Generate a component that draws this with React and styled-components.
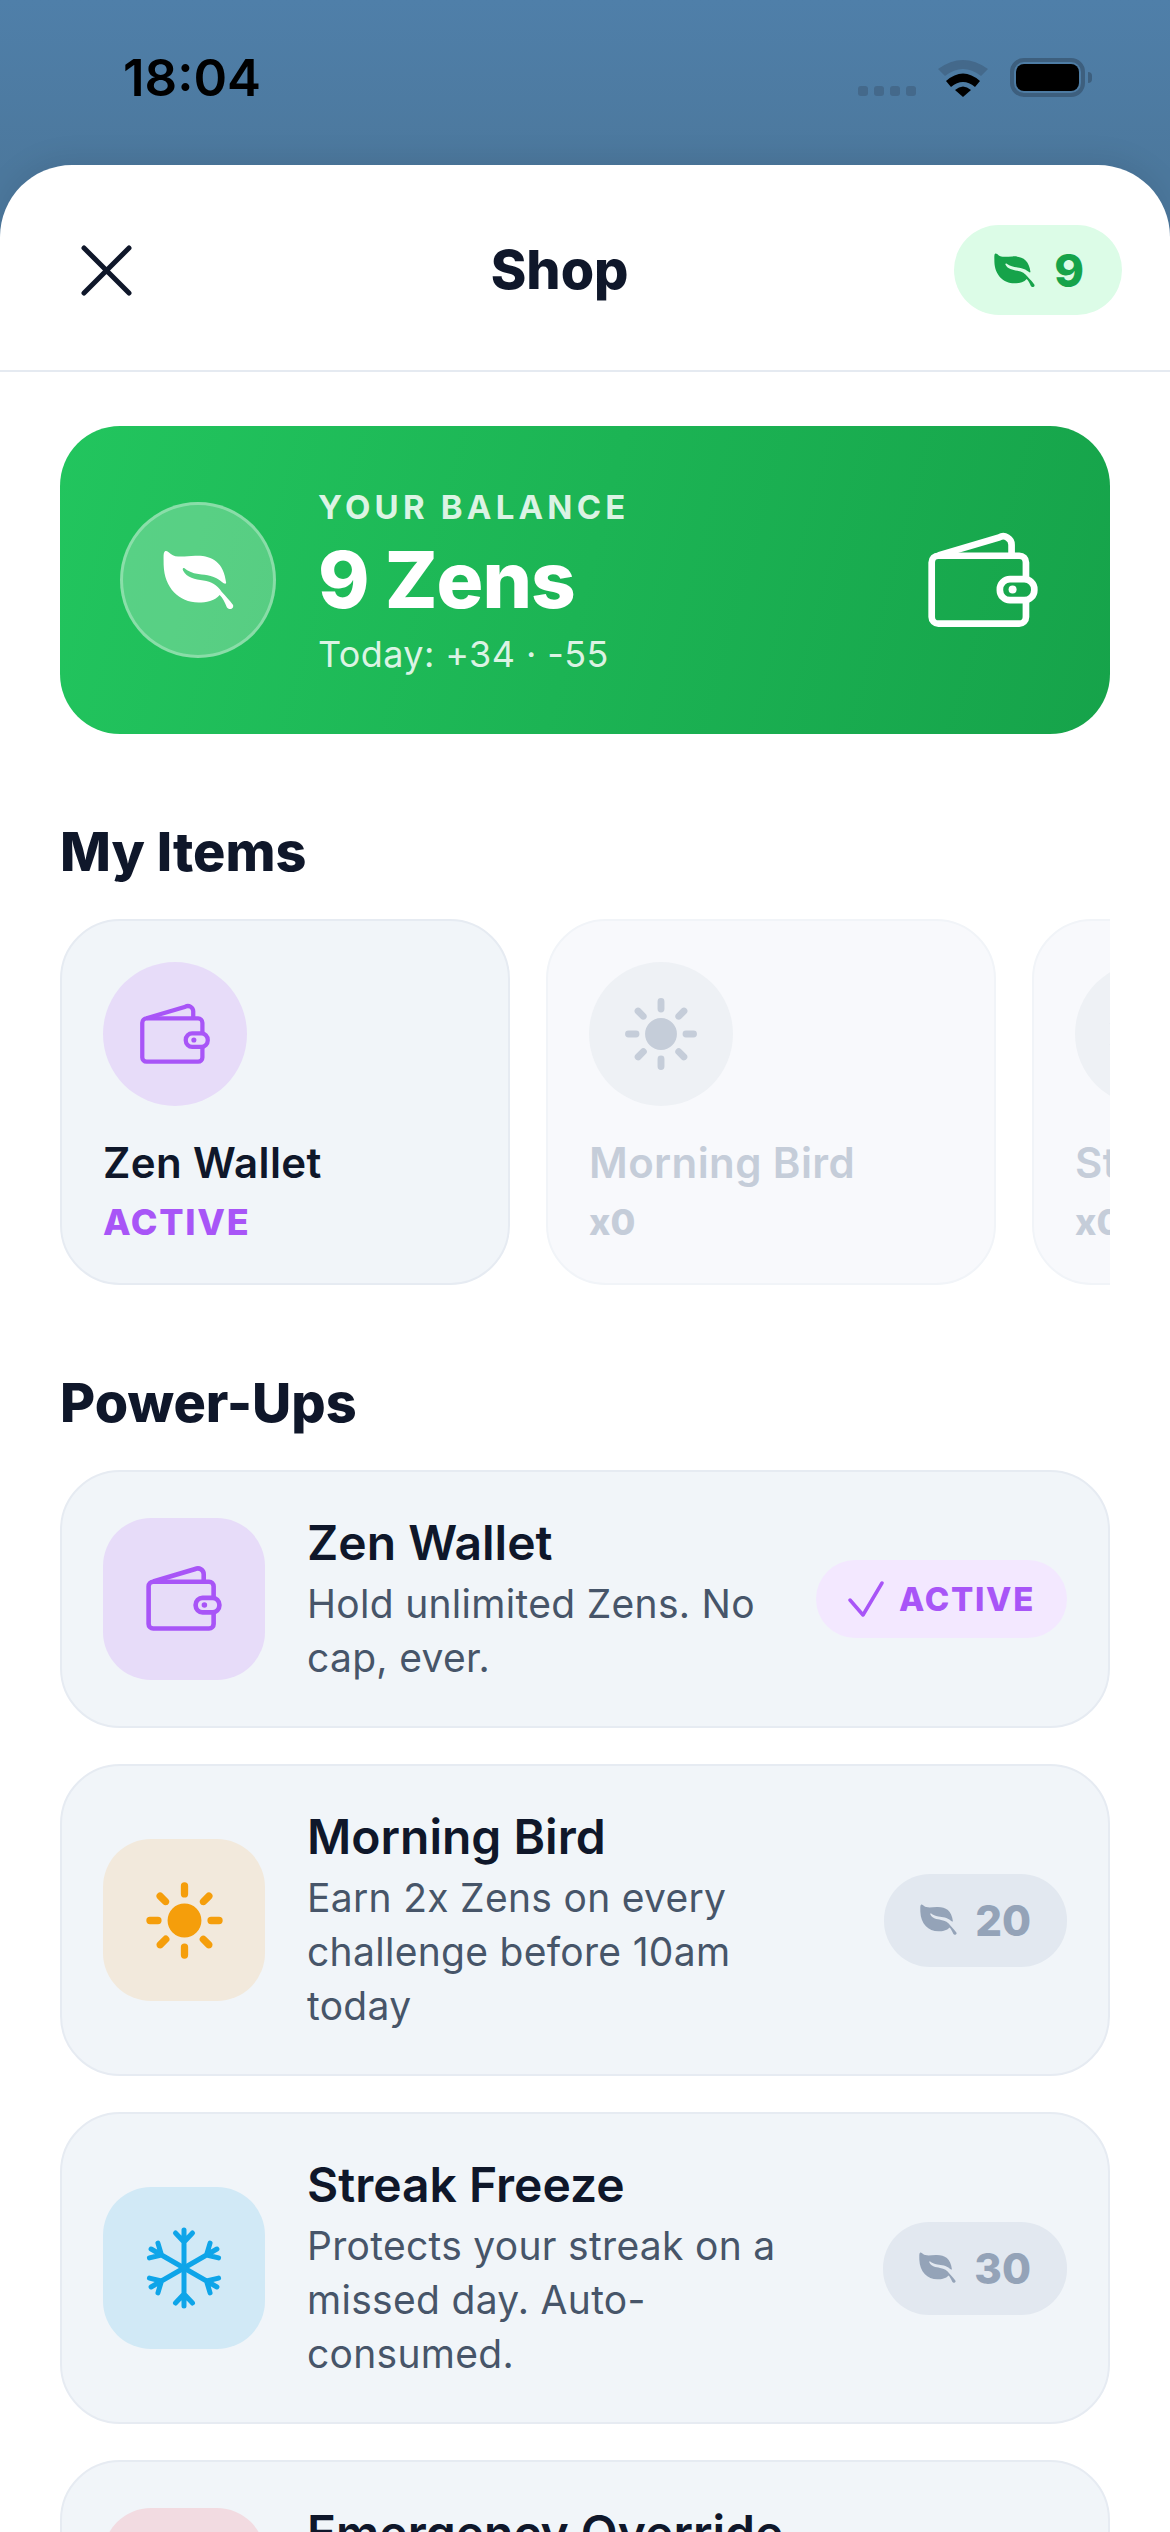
import React from "react";
import styled, { createGlobalStyle } from "styled-components";
import { IoSunny } from "react-icons/io5";

const GlobalStyle = createGlobalStyle`
  html, body {
    margin: 0;
    padding: 0;
    background: #ffffff;
  }
  * {
    box-sizing: border-box;
  }
`;

//Wallet is drawn by hand, no package has the same flap and clasp
const WalletIcon = ({ width, color }) => (
  <svg width={width} viewBox="78 98 347 300" fill="none" stroke={color} strokeWidth="20">
    <path d="M380 245V195a20 20 0 0 0-20-20H118a20 20 0 0 0-20 20V358a20 20 0 0 0 20 20H360a20 20 0 0 0 20-20V308" />
    <path d="M118 174L300 120a25 25 0 0 1 37 22V170" />
    <rect x="302" y="245" width="103" height="63" rx="30" />
    <circle cx="340" cy="276" r="12" fill={color} stroke="none" />
  </svg>
);

const LeafIcon = ({ width, color }) => (
  <svg width={width} viewBox="186 244 218 184" fill={color}>
    <path d="M192 248C196 244 204 250 210 256C224 268 250 264 285 262C335 260 372 280 380 345C378 350 372 346 368 343C345 322 320 322 295 318C275 315 262 308 252 300C247 297 245 303 248 308C258 328 285 335 310 338C335 341 352 352 366 372C378 385 392 400 401 413C405 425 388 430 382 420C376 405 370 392 360 382C345 400 318 405 295 405C235 405 190 360 188 290C188 270 186 252 192 248Z" />
  </svg>
);

const SnowIcon = ({ color }) => (
  <svg width="84" height="84" viewBox="-42 -42 84 84" fill="none" stroke={color} strokeWidth="5" strokeLinecap="round" strokeLinejoin="round">
    {[0, 60, 120, 180, 240, 300].map((angle) => (
      <path key={angle} d="M0 0V-38M-8.5 -35L0 -26L8.5 -35" transform={`rotate(${angle})`} />
    ))}
  </svg>
);

const CloseIcon = () => (
  <svg width="51" height="51" viewBox="0 0 51 51" fill="none" stroke="#0f172a" strokeWidth="5" strokeLinecap="round">
    <path d="M3 3L48 48M48 3L3 48" />
  </svg>
);

const CheckIcon = () => (
  <svg width="36" height="36" viewBox="0 0 36 36" fill="none" stroke="#a855f7" strokeWidth="3.5" strokeLinecap="round" strokeLinejoin="round">
    <path d="M2 19L15 34L34 2" />
  </svg>
);

const WifiIcon = () => (
  <svg width="50" height="37" viewBox="0 0 50 37">
    <path d="M0 9Q25-9 50 9L43 16Q25 2 7 16Z" fill="#44698b" />
    <path d="M8 21Q25 6 42 21L37 27Q25 17 13 27Z" fill="#000000" />
    <path d="M17 30Q25 23 33 30L25 37Z" fill="#000000" />
  </svg>
);

const items = [
  { name: "Zen Wallet", note: "ACTIVE", kind: "wallet", active: true },
  { name: "Morning Bird", note: "x0", kind: "sun" },
  { name: "Streak Freeze", note: "x0", kind: "snow" },
];

const powerUps = [
  {
    name: "Zen Wallet",
    desc: "Hold unlimited Zens. No cap, ever.",
    tint: "#e7dcf9",
    icon: <WalletIcon width={80} color="#a855f7" />,
    active: true,
  },
  {
    name: "Morning Bird",
    desc: "Earn 2x Zens on every challenge before 10am today",
    tint: "#f2e9dc",
    icon: <IoSunny size={85} color="#f59e0b" />,
    price: 20,
  },
  {
    name: "Streak Freeze",
    desc: "Protects your streak on a missed day. Auto-consumed.",
    tint: "#d1e9f6",
    icon: <SnowIcon color="#0ea5e9" />,
    price: 30,
  },
];

const ItemGlyph = ({ kind }) => {
  if (kind === "wallet") return <WalletIcon width={74} color="#a855f7" />;
  if (kind === "sun") return <IoSunny size={80} color="#c5cdd9" />;
  return <SnowIcon color="#c5cdd9" />;
};

const App = () => {
  return (
    <Screen>
      <GlobalStyle />
      <StatusBar>
        <Clock>18:04</Clock>
        <StatusIcons>
          <Signal>
            <SignalDot />
            <SignalDot />
            <SignalDot />
            <SignalDot />
          </Signal>
          <WifiIcon />
          <Battery>
            <BatteryFill />
          </Battery>
        </StatusIcons>
      </StatusBar>

      <Sheet>
        <Header>
          <CloseButton>
            <CloseIcon />
          </CloseButton>
          <HeaderTitle>Shop</HeaderTitle>
          <BalancePill>
            <LeafIcon width={41} color="#16a34a" />
            9
          </BalancePill>
        </Header>

        <BalanceCard>
          <LeafCircle>
            <LeafIcon width={71} color="#ffffff" />
          </LeafCircle>
          <BalanceText>
            <BalanceLabel>YOUR BALANCE</BalanceLabel>
            <BalanceAmount>9 Zens</BalanceAmount>
            <BalanceToday>Today: +34 · -55</BalanceToday>
          </BalanceText>
          <WalletIcon width={116} color="#ffffff" />
        </BalanceCard>

        <SectionTitle>My Items</SectionTitle>
        <ItemsRow>
          {items.map((item) => (
            <ItemCard key={item.name} $active={item.active}>
              <ItemCircle $active={item.active}>
                <ItemGlyph kind={item.kind} />
              </ItemCircle>
              <ItemName $active={item.active}>{item.name}</ItemName>
              <ItemNote $active={item.active}>{item.note}</ItemNote>
            </ItemCard>
          ))}
        </ItemsRow>

        <SectionTitle>Power-Ups</SectionTitle>
        <PowerList>
          {powerUps.map((p) => (
            <PowerRow key={p.name}>
              <PowerIcon $tint={p.tint}>{p.icon}</PowerIcon>
              <PowerInfo>
                <PowerName>{p.name}</PowerName>
                <PowerDesc>{p.desc}</PowerDesc>
              </PowerInfo>
              {p.active ? (
                <ActivePill>
                  <CheckIcon />
                  ACTIVE
                </ActivePill>
              ) : (
                <PricePill>
                  <LeafIcon width={37} color="#94a3b8" />
                  {p.price}
                </PricePill>
              )}
            </PowerRow>
          ))}
          <PowerRow>
            <PowerIcon $tint="#f2dbe1" />
            <PowerInfo $lines={2}>
              <PowerName>Emergency Override</PowerName>
            </PowerInfo>
          </PowerRow>
        </PowerList>
      </Sheet>
    </Screen>
  );
};

const Screen = styled.div`
  width: 1170px;
  height: 2532px;
  overflow: hidden;
  background: linear-gradient(180deg, #4f7fa9 0%, #4c789d 170px);
  font-family: "Inter", "Liberation Sans", sans-serif;
  color: #0f172a;
`;

const StatusBar = styled.div`
  height: 165px;
  padding: 49px 85px 0 123px;
  display: flex;
  justify-content: space-between;
  align-items: flex-start;
`;

const Clock = styled.div`
  font-size: 51px;
  line-height: 58px;
  font-weight: 600;
  color: #000000;
`;

const StatusIcons = styled.div`
  margin-top: 9px;
  display: flex;
  align-items: flex-end;
  gap: 22px;
`;

const Signal = styled.div`
  display: flex;
  gap: 6px;
  margin-bottom: 1px;
`;

const SignalDot = styled.span`
  width: 10px;
  height: 10px;
  border-radius: 3px;
  background: #44698b;
`;

const Battery = styled.div`
  position: relative;
  width: 75px;
  height: 39px;
  border: 4px solid #3d5f7e;
  border-radius: 14px;
  padding: 2px;

  &::after {
    content: "";
    position: absolute;
    right: -11px;
    top: 10px;
    width: 4px;
    height: 11px;
    border-radius: 0 4px 4px 0;
    background: #3d5f7e;
  }
`;

const BatteryFill = styled.div`
  height: 100%;
  border-radius: 8px;
  background: #000000;
`;

const Sheet = styled.div`
  background: #ffffff;
  border-radius: 72px 72px 0 0;
  box-shadow: 0 -6px 30px rgba(0, 0, 0, 0.08);
  padding-bottom: 60px;
`;

const Header = styled.div`
  height: 207px;
  padding: 60px 48px 0;
  display: flex;
  align-items: flex-start;
  justify-content: space-between;
  border-bottom: 2px solid #e5eaf1;
`;

const CloseButton = styled.div`
  width: 117px;
  height: 90px;
  padding-left: 33px;
  display: flex;
  align-items: center;
`;

const HeaderTitle = styled.h1`
  margin: 0;
  height: 90px;
  line-height: 90px;
  font-size: 54px;
  font-weight: 800;
  color: #0f172a;
`;

const BalancePill = styled.div`
  height: 90px;
  padding: 0 38px 0 40px;
  display: flex;
  align-items: center;
  gap: 19px;
  border-radius: 45px;
  background: #dcfce7;
  color: #16a34a;
  font-size: 45px;
  font-weight: 800;
`;

const BalanceCard = styled.div`
  margin: 54px 60px 0;
  height: 308px;
  padding: 0 69px 0 60px;
  display: flex;
  align-items: center;
  border-radius: 60px;
  background: linear-gradient(105deg, #22c55e 0%, #16a34a 100%);
  color: #ffffff;
`;

const LeafCircle = styled.div`
  flex: none;
  width: 156px;
  height: 156px;
  display: flex;
  align-items: center;
  justify-content: center;
  border-radius: 50%;
  background: rgba(255, 255, 255, 0.25);
  border: 3px solid rgba(255, 255, 255, 0.3);
`;

const BalanceText = styled.div`
  flex: 1;
  margin-left: 42px;
  display: flex;
  flex-direction: column;
`;

const BalanceLabel = styled.div`
  font-size: 33px;
  line-height: 42px;
  font-weight: 700;
  letter-spacing: 4.2px;
  margin-bottom: 10px;
  color: rgba(255, 255, 255, 0.85);
`;

const BalanceAmount = styled.div`
  font-size: 78px;
  line-height: 84px;
  font-weight: 800;
  letter-spacing: -1px;
`;

const BalanceToday = styled.div`
  font-size: 36px;
  line-height: 42px;
  margin-top: 11px;
  letter-spacing: 0.4px;
  color: rgba(255, 255, 255, 0.85);
`;

const SectionTitle = styled.h2`
  margin: 87px 60px 36px;
  font-size: 54px;
  line-height: 62px;
  font-weight: 800;
  color: #0f172a;
`;

const ItemsRow = styled.div`
  margin: 0 60px;
  display: flex;
  gap: 36px;
  overflow: hidden;
`;

const ItemCard = styled.div`
  flex: none;
  width: 450px;
  height: 366px;
  padding: 41px;
  border-radius: 60px;
  border: 2px solid ${(p) => (p.$active ? "#e6ebf2" : "#f1f4f8")};
  background: ${(p) => (p.$active ? "#f1f5f9" : "#f8f9fc")};
`;

const ItemCircle = styled.div`
  width: 144px;
  height: 144px;
  display: flex;
  align-items: center;
  justify-content: center;
  border-radius: 50%;
  background: ${(p) => (p.$active ? "#e7dcf9" : "#eef1f5")};
`;

const ItemName = styled.div`
  margin-top: 32px;
  font-size: 42px;
  line-height: 50px;
  font-weight: 600;
  letter-spacing: 0.4px;
  white-space: nowrap;
  color: ${(p) => (p.$active ? "#0f172a" : "#c5cdd9")};
`;

const ItemNote = styled.div`
  margin-top: 10px;
  font-size: 36px;
  line-height: 48px;
  font-weight: 800;
  letter-spacing: ${(p) => (p.$active ? "1.7px" : "0")};
  color: ${(p) => (p.$active ? "#a855f7" : "#c5cdd9")};
`;

const PowerList = styled.div`
  margin: 0 60px;
  display: flex;
  flex-direction: column;
  gap: 36px;
`;

const PowerRow = styled.div`
  padding: 41px;
  display: flex;
  align-items: center;
  border-radius: 60px;
  border: 2px solid #e6ebf2;
  background: #f1f5f9;
`;

const PowerIcon = styled.div`
  flex: none;
  width: 162px;
  height: 162px;
  display: flex;
  align-items: center;
  justify-content: center;
  border-radius: 48px;
  background: ${(p) => p.$tint};
`;

const PowerInfo = styled.div`
  flex: 1;
  min-width: 0;
  margin: 0 48px 0 42px;
  min-height: ${(p) => (p.$lines ? `${64 + p.$lines * 54}px` : "0")};
`;

const PowerName = styled.div`
  font-size: 48px;
  line-height: 60px;
  font-weight: 600;
  margin-bottom: 4px;
  color: #0f172a;
`;

const PowerDesc = styled.div`
  font-size: 39px;
  line-height: 54px;
  letter-spacing: 0.3px;
  color: #475569;
`;

const ActivePill = styled.div`
  flex: none;
  height: 78px;
  padding: 0 32px;
  display: flex;
  align-items: center;
  gap: 15px;
  border-radius: 39px;
  background: #f3e8ff;
  color: #a855f7;
  font-size: 33px;
  font-weight: 800;
  letter-spacing: 1.7px;
`;

const PricePill = styled.div`
  flex: none;
  height: 93px;
  padding: 0 36px;
  display: flex;
  align-items: center;
  gap: 18px;
  border-radius: 46px;
  background: #e2e8f0;
  color: #94a3b8;
  font-size: 42px;
  font-weight: 800;
`;

export default App;
